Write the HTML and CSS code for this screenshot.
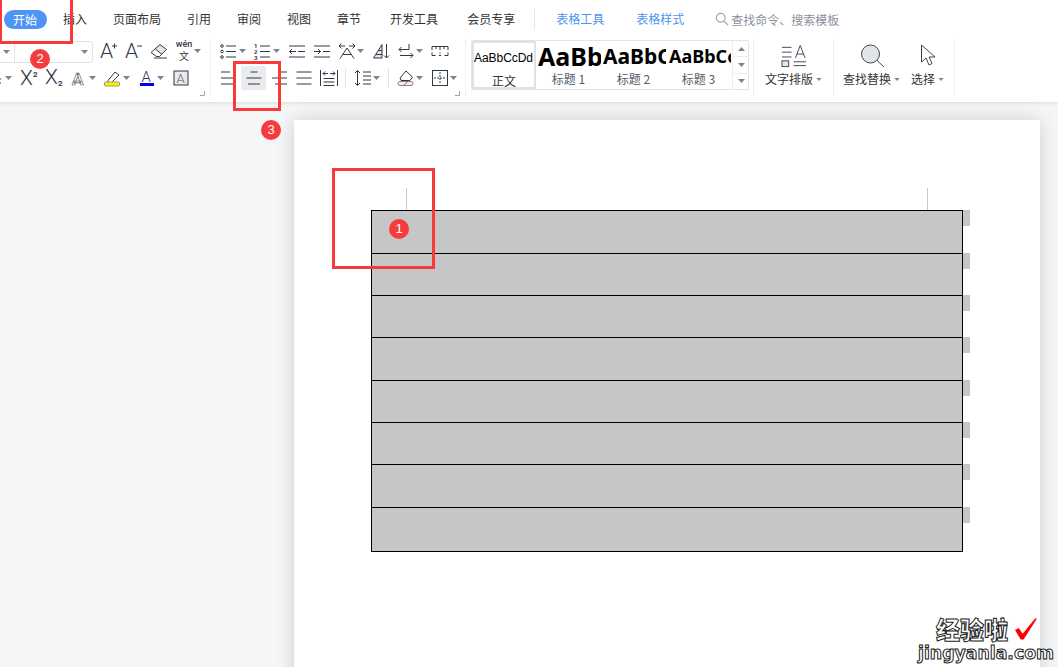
FILE: index.html
```html
<!DOCTYPE html>
<html lang="zh-CN">
<head>
  <meta charset="UTF-8">
  <title>表格工具</title>
  <link rel="stylesheet" href="styles.css">
</head>
<body>

  <svg class="defs" width="0" height="0">
    <symbol id="dd" viewBox="0 0 7 4"><path d="M0 0h7L3.500 4z"/></symbol>
    <symbol id="bullets" viewBox="0 0 18 18">
      <circle cx="2" cy="4" r="1.300"/><circle cx="2" cy="9.500" r="1.300"/><circle cx="2" cy="15" r="1.300"/>
      <path d="M6 4h10M6 9.500h10M6 15h10"/>
    </symbol>
    <symbol id="outdent" viewBox="0 0 18 18">
      <path d="M1 4h16M10 9.500h7M1 15h16M8 9.500H1.500M4 7L1.500 9.500 4 12"/>
    </symbol>
    <symbol id="indent" viewBox="0 0 18 18">
      <path d="M1 4h16M10 9.500h7M1 15h16M1 9.500h6.500M5 7l2.500 2.500L5 12"/>
    </symbol>
    <symbol id="direction" viewBox="0 0 18 18">
      <path d="M1 4h6M3.500 1.500L1 4l2.500 2.500M11 4h6M14.500 1.500L17 4l-2.500 2.500M2 16.500L9 6l7 10.500M5 12.500h8"/>
    </symbol>
    <symbol id="sort" viewBox="0 0 18 18">
      <path class="soft" d="M10 2.500L2 16h8z"/>
      <path d="M10 2.500L1.500 16H10zM3.500 12.500H10M6 8.500h4M14.500 2v14M12 13.500l2.500 2.500 2.500-2.500"/>
    </symbol>
    <symbol id="wrap" viewBox="0 0 18 18">
      <path d="M12 2v5.500H2M4.500 5L2 7.500 4.500 10M3 13.500h13M13.500 11l2.500 2.500-2.500 2.500"/>
    </symbol>
    <symbol id="ruler" viewBox="0 0 18 18">
      <path d="M1 8V4.500h16V8M1 10.500v3h3.500M17 10.500v3h-3.500M5 4.500V7M9 4.500V8M13 4.500V7M8 13.500h2M9 10.500v1"/>
    </symbol>
    <symbol id="align-left" viewBox="0 0 18 18"><path d="M1 3h9M1 9h15M1 15h12"/></symbol>
    <symbol id="align-center" viewBox="0 0 18 18"><path d="M5.500 3h7M1.500 9h15M3 15h12"/></symbol>
    <symbol id="align-right" viewBox="0 0 18 18"><path d="M8 3h9M2 9h15M5 15h12"/></symbol>
    <symbol id="justify" viewBox="0 0 18 18"><path d="M1.500 3h15M1.500 9h15M1.500 15h15"/></symbol>
    <symbol id="distribute" viewBox="0 0 18 18">
      <path d="M0.500 1v16M17.500 1v16M3.500 9.500h11M3.500 13h11M3.500 16.500h11M3 4.500h5M10 4.500h5M5 2.500l-2 2 2 2M13 2.500l2 2-2 2"/>
    </symbol>
    <symbol id="spacing" viewBox="0 0 18 18">
      <path d="M3.500 1.500v15M1 4L3.500 1.500 6 4M1 14l2.500 2.500L6 14M9 3h8M9 7h8M9 11h8M9 15h8"/>
    </symbol>
    <symbol id="bucket" viewBox="0 0 18 18">
      <path d="M3 9l6-7 6.500 6-2.500 3.500H4z"/>
      <rect class="bucket-base" x="1" y="12.500" width="15" height="4" rx="2"/>
      <path class="slash" d="M6 17l6-5.500"/>
    </symbol>
    <symbol id="borders" viewBox="0 0 18 18">
      <rect x="1.500" y="1.500" width="15" height="15"/>
      <path class="dots" d="M9 3v12M3 9h12"/>
    </symbol>
    <symbol id="eraser" viewBox="0 0 18 18">
      <path class="soft" d="M10 2.500l6.500 5-4.500 5-6.500-5.500z"/>
      <path d="M1 10.500l9-8 6.500 5-7 7h-3zM5.500 7l6.500 5.500M4 16h13"/>
    </symbol>
    <symbol id="marker" viewBox="0 0 18 18">
      <path d="M4 11.500l7-8.500 4 3-7.500 7.500H4z"/>
      <rect class="yellow" x="0.500" y="13" width="15" height="4" rx="1"/>
    </symbol>
    <symbol id="corner" viewBox="0 0 5 5"><path d="M0 4.500h4.500V0"/></symbol>
  </svg>

  <header class="ribbon">
    <nav class="tabs">
      <span class="tab tab-on">开始</span>
      <span class="tab">插入</span>
      <span class="tab">页面布局</span>
      <span class="tab">引用</span>
      <span class="tab">审阅</span>
      <span class="tab">视图</span>
      <span class="tab">章节</span>
      <span class="tab tab-wide">开发工具</span>
      <span class="tab tab-wide">会员专享</span>
      <span class="tab-sep"></span>
      <span class="tab tab-ctx">表格工具</span>
      <span class="tab tab-ctx tab-ctx2">表格样式</span>
      <span class="search">
        <svg class="search-ico" viewBox="0 0 16 16"><circle cx="6.500" cy="6.500" r="5"/><path d="M10 10l5 5"/></svg>
        查找命令、搜索模板
      </span>
    </nav>

    <div class="tools">
      <section class="group group-font">
        <div class="row">
          <div class="combo">
            <span class="combo-a"><svg class="dd"><use href="#dd"/></svg></span>
            <span class="combo-b"><svg class="dd"><use href="#dd"/></svg></span>
          </div>
          <span class="tool"><svg class="ico" viewBox="0 0 18 18"><text class="big" x="0" y="16">A</text><path d="M12 4h5M14.500 1.500v5"/></svg></span>
          <span class="tool"><svg class="ico" viewBox="0 0 18 18"><text class="big" x="0" y="16">A</text><path d="M12 4h5"/></svg></span>
          <span class="tool"><svg class="ico"><use href="#eraser"/></svg></span>
          <span class="tool"><svg class="ico" viewBox="0 0 18 18"><text class="pin" x="9" y="4.500">wén</text><text class="cn" x="9" y="17.500">文</text></svg></span>
          <svg class="dd"><use href="#dd"/></svg>
        </div>
        <div class="row row-cut">
          <span class="tool"><svg class="ico" viewBox="0 0 18 18"><path d="M1 14h16M1 10h16"/></svg></span>
          <svg class="dd dd-far"><use href="#dd"/></svg>
          <span class="tool"><svg class="ico" viewBox="0 0 18 18"><text class="big" x="0" y="16">X</text><text class="sub" x="13" y="8">2</text></svg></span>
          <span class="tool"><svg class="ico" viewBox="0 0 18 18"><text class="big" x="0" y="15">X</text><text class="sub" x="13" y="17">2</text></svg></span>
          <span class="tool"><svg class="ico" viewBox="0 0 18 18"><text class="big bold" x="2" y="16">A</text></svg></span>
          <svg class="dd"><use href="#dd"/></svg>
          <span class="tool"><svg class="ico"><use href="#marker"/></svg></span>
          <svg class="dd"><use href="#dd"/></svg>
          <span class="tool"><svg class="ico" viewBox="0 0 18 18"><text class="mid" x="3.500" y="13">A</text><rect class="blue" x="2" y="14" width="14" height="3"/></svg></span>
          <svg class="dd"><use href="#dd"/></svg>
          <span class="tool"><svg class="ico" viewBox="0 0 18 18"><rect class="softbox" x="2" y="2" width="14" height="14"/><text class="mid thin" x="4.500" y="13.500">A</text></svg></span>
        </div>
        <svg class="corner"><use href="#corner"/></svg>
      </section>

      <section class="group group-para">
        <div class="row">
          <span class="tool"><svg class="ico"><use href="#bullets"/></svg></span>
          <svg class="dd"><use href="#dd"/></svg>
          <span class="tool"><svg class="ico" viewBox="0 0 18 18"><text class="tiny" x="0" y="5.500">1</text><text class="tiny" x="0" y="11.500">2</text><text class="tiny" x="0" y="17.500">3</text><path d="M6 4h10M6 9.500h10M6 15h10"/></svg></span>
          <svg class="dd"><use href="#dd"/></svg>
          <span class="tool"><svg class="ico"><use href="#outdent"/></svg></span>
          <span class="tool"><svg class="ico"><use href="#indent"/></svg></span>
          <span class="tool"><svg class="ico"><use href="#direction"/></svg></span>
          <svg class="dd"><use href="#dd"/></svg>
          <span class="tool"><svg class="ico"><use href="#sort"/></svg></span>
          <span class="tool"><svg class="ico"><use href="#wrap"/></svg></span>
          <svg class="dd"><use href="#dd"/></svg>
          <span class="tool"><svg class="ico"><use href="#ruler"/></svg></span>
        </div>
        <div class="row">
          <span class="tool"><svg class="ico"><use href="#align-left"/></svg></span>
          <span class="tool tool-on"><svg class="ico"><use href="#align-center"/></svg></span>
          <span class="tool"><svg class="ico"><use href="#align-right"/></svg></span>
          <span class="tool"><svg class="ico"><use href="#justify"/></svg></span>
          <span class="tool"><svg class="ico"><use href="#distribute"/></svg></span>
          <span class="row-sep"></span>
          <span class="tool"><svg class="ico"><use href="#spacing"/></svg></span>
          <svg class="dd"><use href="#dd"/></svg>
          <span class="row-sep"></span>
          <span class="tool"><svg class="ico"><use href="#bucket"/></svg></span>
          <svg class="dd"><use href="#dd"/></svg>
          <span class="tool"><svg class="ico"><use href="#borders"/></svg></span>
          <svg class="dd"><use href="#dd"/></svg>
        </div>
        <svg class="corner"><use href="#corner"/></svg>
      </section>

      <section class="group group-styles">
        <div class="gallery">
          <div class="style style-on"><span class="sample s0">AaBbCcDd</span><span class="style-name">正文</span></div>
          <div class="style"><span class="sample s1">AaBb</span><span class="style-name">标题 1</span></div>
          <div class="style"><span class="sample s2">AaBbC</span><span class="style-name">标题 2</span></div>
          <div class="style"><span class="sample s3">AaBbCc</span><span class="style-name">标题 3</span></div>
          <div class="scroll">
            <span class="scroll-btn"><svg class="dd dd-up"><use href="#dd"/></svg></span>
            <span class="scroll-btn"><svg class="dd"><use href="#dd"/></svg></span>
            <span class="scroll-btn scroll-more"><svg class="dd"><use href="#dd"/></svg></span>
          </div>
        </div>
      </section>

      <section class="group group-text">
        <svg class="large" viewBox="0 0 26 24">
          <path d="M1 3h10M1 8h10M1 13h10M15 14l5-13 5 13M16.500 10h7M13 18h13M13 22h13"/>
          <rect class="soft" x="1" y="17" width="7" height="6"/>
          <rect x="1" y="17" width="7" height="6"/>
        </svg>
        <span class="label">文字排版<svg class="dd dd-label"><use href="#dd"/></svg></span>
      </section>

      <section class="group group-find">
        <div class="find-col find-a">
          <svg class="large" viewBox="0 0 24 24">
            <circle class="soft" cx="10" cy="10" r="9"/><circle cx="10" cy="10" r="9"/><path d="M16.500 16.500l7 6.500"/>
          </svg>
          <span class="label">查找替换<svg class="dd dd-label"><use href="#dd"/></svg></span>
        </div>
        <div class="find-col find-b">
          <svg class="large" viewBox="0 0 24 24">
            <path d="M5 1v17l4.500-4 3 7 3-1.500-3-6.500h6z"/>
          </svg>
          <span class="label">选择<svg class="dd dd-label"><use href="#dd"/></svg></span>
        </div>
      </section>
    </div>
  </header>

  <main class="stage">
    <div class="page">
      <div class="guides"><span class="tick"></span><span class="tick"></span></div>
      <div class="doc-table">
        <div class="doc-row"><div class="doc-cell"></div><span class="row-end"></span></div>
        <div class="doc-row"><div class="doc-cell"></div><span class="row-end"></span></div>
        <div class="doc-row"><div class="doc-cell"></div><span class="row-end"></span></div>
        <div class="doc-row"><div class="doc-cell"></div><span class="row-end"></span></div>
        <div class="doc-row"><div class="doc-cell"></div><span class="row-end"></span></div>
        <div class="doc-row"><div class="doc-cell"></div><span class="row-end"></span></div>
        <div class="doc-row"><div class="doc-cell"></div><span class="row-end"></span></div>
        <div class="doc-row doc-row-last"><div class="doc-cell"></div><span class="row-end"></span></div>
      </div>
    </div>
  </main>

  <!-- annotations on top of the screenshot -->
  <div class="mark mark-1"></div>
  <div class="mark mark-2"></div>
  <div class="mark mark-3"></div>
  <span class="badge badge-1">1</span>
  <span class="badge badge-2">2</span>
  <span class="badge badge-3">3</span>

  <div class="watermark">
    <div class="wm-top">经验啦<svg class="wm-check" viewBox="0 0 24 24"><path d="M1 13l4-2 4 6L22 1h2L10 23H7z"/></svg></div>
    <div class="wm-url">jingyanla.com</div>
  </div>

</body>
</html>
```

FILE: styles.css
```css
* {
  box-sizing: border-box;
}
html, body {
  height: 100%;
}
body {
  margin: 0;
  background: #f5f6f8;
  color: #333;
  font-family: "Noto Sans CJK SC", "Noto Sans", sans-serif;
  font-size: 12px;
  overflow: hidden;
  position: relative;
}
.defs {
  display: block;
}

/* ribbon */
.ribbon {
  height: 102px;
  background: #fff;
  box-shadow: 0 1px 4px rgba(0, 0, 0, .12);
  position: relative;
  z-index: 2;
}
.tabs {
  height: 38px;
  display: flex;
  align-items: center;
  padding-left: 4px;
  gap: 26px;
}
.tab {
  white-space: nowrap;
  line-height: 18px;
}
.tab-on {
  background: #4d94f5;
  color: #fff;
  padding: 1px 10px 0 9px;
  border-radius: 10px;
  margin-right: -10px;
}
.tab-wide {
  margin-left: 3px;
}
.tab-sep {
  width: 1px;
  height: 20px;
  background: #e4e5e7;
  margin: 0 -5px 0 -7px;
}
.tab-ctx {
  color: #4d94f0;
}
.tab-ctx2 {
  margin-left: 6px;
}
.search {
  display: flex;
  align-items: center;
  gap: 2px;
  color: #8b909a;
  margin-left: 5px;
}
.search-ico {
  width: 14px;
  height: 14px;
  fill: none;
  stroke: #9aa4b5;
  stroke-width: 1.3;
}

.tools {
  display: flex;
  height: 60px;
}
.group {
  height: 60px;
  border-right: 1px solid #eff0f2;
  position: relative;
}
.group-font {
  width: 211px;
  overflow: hidden;
}
.group-para {
  width: 255px;
  padding-left: 5px;
}
.group-styles {
  width: 288px;
  padding: 2px 0 0 5px;
}
.group-text {
  width: 80px;
}
.group-find {
  width: 121px;
  display: flex;
  padding-left: 9px;
}
.row {
  display: flex;
  align-items: center;
  height: 24px;
  margin: 1px 0 3px;
}
.row-cut {
  margin-left: -20px;
}
.tool {
  flex: none;
  width: 25px;
  height: 24px;
  display: flex;
  align-items: center;
  justify-content: center;
  border-radius: 2px;
}
.tool-on {
  background: #e9ebef;
}
.row-sep {
  flex: none;
  width: 1px;
  height: 20px;
  background: #e1e3e6;
  margin: 0 4px;
}
.ico {
  width: 18px;
  height: 18px;
  fill: none;
  stroke: #2f3846;
  stroke-width: 1;
  overflow: visible;
}
.dd {
  flex: none;
  width: 7px;
  height: 4px;
  margin: 0 4px 0 -2px;
  fill: #7b8494;
  stroke: none;
}
.dd-far {
  margin: 0 4px 0 0;
}
.soft {
  fill: #e3e4e7;
  stroke: none;
}
.softbox {
  fill: #e9eaec;
}
.bucket-base {
  fill: #f1f1f2;
  stroke: #7d8490;
}
.yellow {
  fill: #fff200;
  stroke: #9a9a80;
}
.blue {
  fill: #0000f0;
  stroke: none;
}
.slash {
  stroke: #e8504a;
}
.dots {
  stroke-dasharray: 2 1;
}
.corner {
  position: absolute;
  right: 5px;
  bottom: 2px;
  width: 5px;
  height: 5px;
  fill: none;
  stroke: #9aa1ad;
}
.ico text {
  fill: #2f3846;
  stroke: none;
  font-family: "Roboto", "Liberation Sans", sans-serif;
}
.ico .tiny {
  font-size: 6px;
  font-weight: 700;
}
.ico .big {
  font-size: 21px;
  font-weight: 300;
}
.ico .bold {
  font-size: 17px;
  font-weight: 700;
  fill: #fff;
  stroke: #5a6270;
  stroke-width: .7;
}
.ico .sub {
  font-size: 8px;
  font-weight: 700;
}
.ico .mid {
  font-size: 15px;
  font-weight: 300;
}
.ico .thin {
  font-size: 13px;
  fill: #555c69;
}
.ico .pin {
  font-size: 9px;
  font-weight: 500;
  text-anchor: middle;
}
.ico .cn {
  font-size: 10px;
  text-anchor: middle;
  font-family: "Noto Sans CJK SC", sans-serif;
}
.combo {
  flex: none;
  display: flex;
  width: 100px;
  height: 22px;
  margin: 2px 3px 0 -7px;
  border: 1px solid #e3e4e7;
  border-radius: 3px;
}
.combo-a {
  width: 21px;
  border-right: 1px solid #e3e4e7;
  display: flex;
  align-items: center;
  justify-content: flex-end;
}
.combo-b {
  flex: 1;
  display: flex;
  align-items: center;
  justify-content: flex-end;
}

/* style gallery */
.gallery {
  display: flex;
  width: 278px;
  height: 50px;
  border: 1px solid #e3e4e7;
  border-radius: 2px;
}
.style {
  flex: none;
  width: 65px;
  height: 48px;
  display: flex;
  flex-direction: column;
  align-items: center;
  overflow: hidden;
}
.style-on {
  width: 64px;
  border: 2px solid #e0e1e5;
}
.sample {
  height: 30px;
  line-height: 30px;
  color: #000;
  white-space: nowrap;
  font-family: "Noto Sans", sans-serif;
  align-self: flex-start;
}
.s0 {
  font-family: "Liberation Sans", sans-serif;
  font-size: 12px;
  letter-spacing: -.05px;
}
.s1 {
  font-size: 25px;
  font-weight: 700;
  padding-left: 2px;
}
.s2 {
  font-size: 21px;
  font-weight: 700;
  padding-left: 2px;
}
.s3 {
  font-size: 18px;
  font-weight: 700;
  padding-left: 3px;
}
.style-name {
  line-height: 16px;
  color: #555c68;
}
.style-on .style-name {
  color: #333;
}
.scroll {
  flex: none;
  width: 17px;
  margin-left: 1px;
  display: flex;
  flex-direction: column;
  border-left: 1px solid #eceef0;
}
.scroll-btn {
  flex: 1;
  display: flex;
  align-items: center;
  justify-content: center;
  border-bottom: 1px solid #eceef0;
}
.scroll-btn:last-child {
  border-bottom: 0;
}
.scroll-btn .dd {
  margin: 0;
}
.dd-up {
  transform: rotate(180deg);
}

.group-text, .find-col {
  display: flex;
  flex-direction: column;
  align-items: center;
  padding-top: 6px;
}
.find-a {
  width: 68px;
  align-items: flex-start;
}
.find-b {
  align-items: flex-start;
}
.large {
  width: 25px;
  height: 24px;
  fill: none;
  stroke: #3f4756;
  stroke-width: 1;
}
.find-a .large {
  margin-left: 17px;
}
.find-b .large {
  margin-left: 5px;
}
.label {
  margin-top: 2px;
  display: flex;
  align-items: center;
  line-height: 18px;
  white-space: nowrap;
}
.dd-label {
  width: 6px;
  height: 3px;
  margin: 0 0 0 3px;
}

/* document */
.stage {
  height: 565px;
  overflow: hidden;
  padding: 18px 0 0 294px;
}
.page {
  width: 746px;
  height: 620px;
  background: #fff;
  box-shadow: 0 0 18px rgba(0, 0, 0, .16);
  padding: 68px 0 0 77px;
}
.guides {
  height: 22px;
  display: flex;
  justify-content: space-between;
  width: 522px;
  margin-left: 35px;
}
.tick {
  width: 1px;
  background: #c9c9c9;
}
.doc-row {
  display: flex;
  height: 43.400px;
  margin-top: -1px;
}
.doc-row:first-child {
  height: 43.900px;
  margin-top: 0;
}
.doc-row:nth-child(2) {
  height: 42.900px;
}
.doc-row-last {
  height: 45px;
}
.doc-cell {
  width: 592px;
  background: #c6c6c6;
  border: 1px solid #000;
}
.row-end {
  width: 7px;
  height: 16px;
  background: #c6c6c6;
}

/* annotations */
.mark {
  position: absolute;
  z-index: 3;
  border: 3px solid #fa3a3a;
}
.mark-1 {
  left: 332px;
  top: 168px;
  width: 103px;
  height: 101px;
}
.mark-2 {
  left: -1px;
  top: -5px;
  width: 74px;
  height: 49px;
}
.mark-3 {
  left: 233px;
  top: 61px;
  width: 48px;
  height: 50px;
}
.badge {
  position: absolute;
  z-index: 3;
  width: 20px;
  height: 20px;
  border-radius: 50%;
  background: #f53c3c;
  color: #fff;
  font-family: "Liberation Sans", sans-serif;
  font-size: 13px;
  line-height: 20px;
  text-align: center;
}
.badge-1 {
  left: 389px;
  top: 219px;
}
.badge-2 {
  left: 30px;
  top: 49px;
}
.badge-3 {
  left: 261px;
  top: 120px;
}

.watermark {
  position: absolute;
  z-index: 3;
  left: 918px;
  top: 614px;
  width: 130px;
}
.wm-top {
  display: flex;
  align-items: center;
  padding-left: 18px;
  height: 29px;
  font-size: 24px;
  font-weight: 900;
  line-height: 29px;
  color: #fff;
  -webkit-text-stroke: 1px #222;
}
.wm-check {
  width: 23px;
  height: 24px;
  margin-left: 6px;
  fill: #f00;
  stroke: none;
}
.wm-url {
  font-family: "DejaVu Sans", sans-serif;
  font-size: 17.300px;
  font-weight: 700;
  line-height: 20px;
  color: #fff;
  -webkit-text-stroke: 1px #222;
  white-space: nowrap;
}
```
